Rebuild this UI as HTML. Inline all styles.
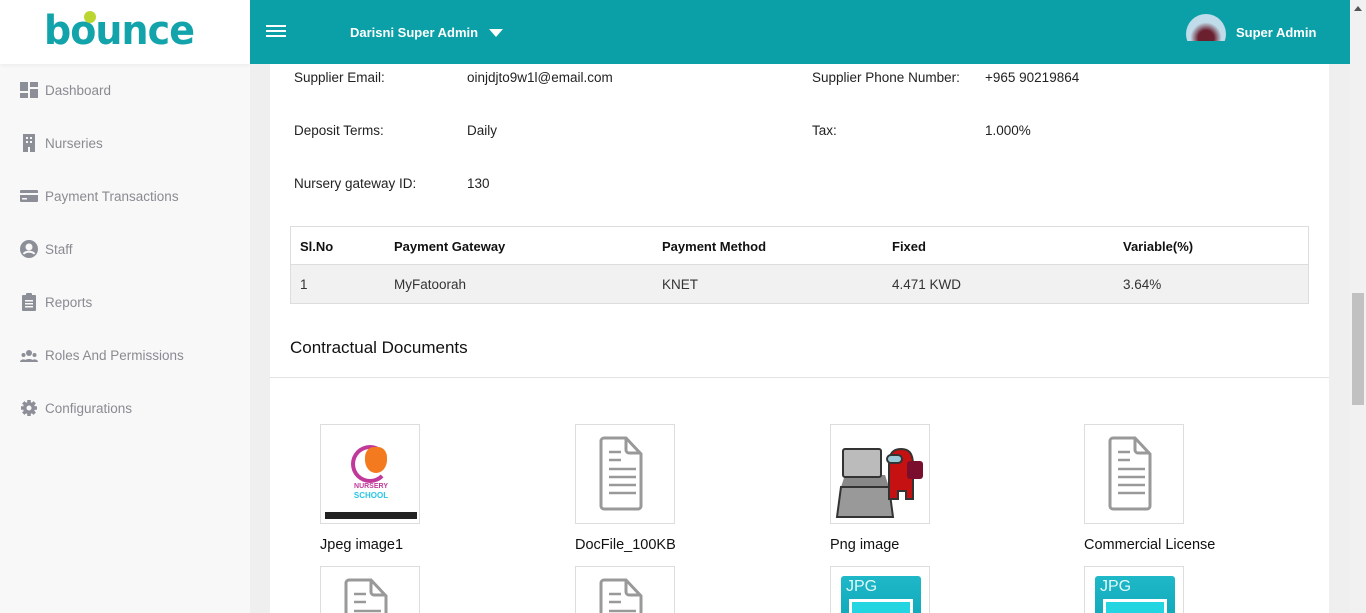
<!DOCTYPE html>
<html style="height:613px;overflow:hidden"><head><style>
*{box-sizing:border-box;margin:0;padding:0}
body{width:1366px;height:613px;overflow:hidden;background:#efefef;font-family:"Liberation Sans",sans-serif;position:relative}
.side{position:absolute;left:0;top:0;width:250px;height:613px;background:#f8f8f8}
.logo{height:64px;background:#fff;box-shadow:0 2px 3px rgba(0,0,0,.04);position:relative;overflow:hidden}
.nav{position:absolute;left:20px;font-size:13.5px;color:#8a8a92;display:flex;align-items:center}
.nav svg{width:18px;height:18px;margin-right:7px;fill:#8d8f98}
.hdr{position:absolute;left:250px;top:0;width:1100px;height:64px;background:#0ba0a8;color:#fff;font-weight:bold;font-size:13px}
.card{position:absolute;left:270px;top:64px;width:1059px;height:549px;background:#fff}
.t{position:absolute;font-size:13.5px;color:#222}
.scroll{position:absolute;left:1350px;top:0;width:16px;height:613px;background:#f1f1f1}
.doc{position:absolute;width:100px;height:100px;border:1px solid #ddd;background:#fff;overflow:hidden}
.clip{position:absolute;left:0;top:0;width:1366px;height:613px;overflow:hidden}
.lbl{position:absolute;font-size:14.5px;color:#111}
</style></head><body><div class="clip">
<div class="side">
 <div class="logo"><span style="position:absolute;left:44px;top:8px;font-size:40px;font-weight:bold;color:#13a3ab;letter-spacing:-1px;font-family:'DejaVu Sans',sans-serif;transform:scaleX(0.95);transform-origin:left">bounce</span><span style="position:absolute;left:84px;top:11px;width:12px;height:12px;border-radius:50%;background:#bcd631"></span></div>
 <div class="nav" style="top:81px"><svg viewBox="0 0 18 18"><rect x="0" y="1" width="8" height="9"/><rect x="10" y="1" width="8" height="5"/><rect x="0" y="12" width="8" height="5"/><rect x="10" y="8" width="8" height="9"/></svg>Dashboard</div>
 <div class="nav" style="top:134px"><svg viewBox="0 0 18 18"><rect x="3" y="0" width="12" height="18"/><rect x="6" y="3" width="2" height="2" fill="#f8f8f8"/><rect x="10" y="3" width="2" height="2" fill="#f8f8f8"/><rect x="6" y="7" width="2" height="2" fill="#f8f8f8"/><rect x="10" y="7" width="2" height="2" fill="#f8f8f8"/><rect x="8" y="13" width="2" height="5" fill="#f8f8f8"/></svg>Nurseries</div>
 <div class="nav" style="top:187px"><svg viewBox="0 0 18 18"><rect x="0" y="3" width="18" height="12" rx="1"/><rect x="0" y="6" width="18" height="2" fill="#f8f8f8"/><rect x="2" y="11" width="5" height="1.5" fill="#f8f8f8"/></svg>Payment Transactions</div>
 <div class="nav" style="top:240px"><svg viewBox="0 0 18 18"><circle cx="9" cy="9" r="9"/><circle cx="9" cy="7" r="3.5" fill="#f8f8f8"/><path d="M3.5 14c2-3 9-3 11 0" stroke="#f8f8f8" stroke-width="2" fill="none"/></svg>Staff</div>
 <div class="nav" style="top:293px"><svg viewBox="0 0 18 18"><rect x="2" y="2" width="14" height="16" rx="1"/><rect x="6" y="0" width="6" height="4" rx="1"/><rect x="5" y="7" width="8" height="1.5" fill="#f8f8f8"/><rect x="5" y="10" width="8" height="1.5" fill="#f8f8f8"/><rect x="5" y="13" width="8" height="1.5" fill="#f8f8f8"/></svg>Reports</div>
 <div class="nav" style="top:346px"><svg viewBox="0 0 18 18"><circle cx="9" cy="7" r="3"/><circle cx="3.5" cy="9" r="2"/><circle cx="14.5" cy="9" r="2"/><path d="M4 16c0-4 10-4 10 0z"/><path d="M0 16c0-3 5-3 5-2v2z"/><path d="M18 16c0-3-5-3-5-2v2z"/></svg>Roles And Permissions</div>
 <div class="nav" style="top:399px"><svg viewBox="0 0 18 18"><circle cx="9" cy="9" r="6"/><g stroke="#8d8f98" stroke-width="3.5"><path d="M9 1v16M1 9h16M3.3 3.3l11.4 11.4M14.7 3.3L3.3 14.7"/></g><circle cx="9" cy="9" r="2.5" fill="#f8f8f8"/></svg>Configurations</div>
</div>
<div class="hdr">
 <div style="position:absolute;left:16px;top:25px;width:20px;height:2px;background:#fff;box-shadow:0 5px 0 #fff,0 10px 0 #fff"></div>
 <div style="position:absolute;left:100px;top:25px">Darisni Super Admin</div>
 <div style="position:absolute;left:239px;top:29px;border-left:7px solid transparent;border-right:7px solid transparent;border-top:8px solid #fff"></div>
 <div style="position:absolute;left:936px;top:14px;width:40px;height:40px;border-radius:50%;background:radial-gradient(circle at 50% 60%,#6b2030 25%,#c0dcea 50%);clip-path:inset(0 0 13px 0)"></div>
 <div style="position:absolute;left:986px;top:25px">Super Admin</div>
</div>
<div class="card">
 <div class="t" style="left:24px;top:6px">Supplier Email:</div>
 <div class="t" style="left:197px;top:6px">oinjdjto9w1l@email.com</div>
 <div class="t" style="left:542px;top:6px">Supplier Phone Number:</div>
 <div class="t" style="left:715px;top:6px">+965 90219864</div>
 <div class="t" style="left:24px;top:59px">Deposit Terms:</div>
 <div class="t" style="left:197px;top:59px">Daily</div>
 <div class="t" style="left:542px;top:59px">Tax:</div>
 <div class="t" style="left:715px;top:59px">1.000%</div>
 <div class="t" style="left:24px;top:112px">Nursery gateway ID:</div>
 <div class="t" style="left:197px;top:112px">130</div>
 <div style="position:absolute;left:20px;top:162px;width:1019px;height:78px;border:1px solid #ddd">
  <div style="height:38px;border-bottom:1px solid #ddd;position:relative;font-weight:bold;font-size:13px;color:#111">
   <span style="position:absolute;left:9px;top:12px">Sl.No</span><span style="position:absolute;left:103px;top:12px">Payment Gateway</span><span style="position:absolute;left:371px;top:12px">Payment Method</span><span style="position:absolute;left:601px;top:12px">Fixed</span><span style="position:absolute;left:832px;top:12px">Variable(%)</span>
  </div>
  <div style="height:38px;background:#f1f1f1;position:relative;font-size:13.5px;color:#333">
   <span style="position:absolute;left:9px;top:12px">1</span><span style="position:absolute;left:103px;top:12px">MyFatoorah</span><span style="position:absolute;left:371px;top:12px">KNET</span><span style="position:absolute;left:601px;top:12px">4.471 KWD</span><span style="position:absolute;left:832px;top:12px">3.64%</span>
  </div>
 </div>
 <div style="position:absolute;left:20px;top:274px;font-size:17px;color:#111">Contractual Documents</div>
 <div style="position:absolute;left:0;top:313px;width:1059px;height:1px;background:#e3e3e3"></div>
</div>
<svg width="0" height="0" style="position:absolute"><defs><g id="d"><path d="M28 13h22l15 16v52a3 3 0 0 1-3 3H28a3 3 0 0 1-3-3V16a3 3 0 0 1 3-3z" fill="none" stroke="#999" stroke-width="3"/><path d="M50 13v12a3 3 0 0 0 3 3h12" fill="none" stroke="#999" stroke-width="3"/><g stroke="#999" stroke-width="2.5"><path d="M33 27h12M33 35h12M33 44h27M33 52h27M33 60h27M33 68h27"/></g></g></defs></svg>
<div class="doc" style="left:320px;top:424px"><div style="position:absolute;left:30px;top:20px;width:38px;height:38px;border-radius:50%;border:4px solid #c0399a;border-right-color:transparent"></div><div style="position:absolute;left:44px;top:22px;width:22px;height:26px;background:#f47a20;border-radius:40% 40% 50% 50%"></div><div style="position:absolute;left:0;top:58px;width:100px;text-align:center;font-size:7px;font-weight:bold;color:#c0399a">NURSERY</div><div style="position:absolute;left:0;top:66px;width:100px;text-align:center;font-size:8px;font-weight:bold;color:#29c5e6">SCHOOL</div><div style="position:absolute;left:4px;top:87px;width:92px;height:7px;background:#222"></div></div>
<div class="doc" style="left:575px;top:424px"><svg width="100" height="100"><use href="#d"/></svg></div>
<div class="doc" style="left:830px;top:424px"><svg width="100" height="100"><path d="M10 62l4-12h40l4 12z" fill="#888"/><rect x="12" y="24" width="38" height="28" rx="2" fill="#bbb" stroke="#333" stroke-width="2"/><path d="M6 92l4-30h48l4 30z" fill="#999" stroke="#333" stroke-width="2"/><path d="M58 40c0-12 4-16 12-16s12 4 12 16v34h-7v-8h-8v8h-9z" fill="#c51111" stroke="#333" stroke-width="2"/><rect x="76" y="36" width="16" height="18" rx="3" fill="#7a0e2e"/><rect x="56" y="30" width="15" height="8" rx="4" fill="#9ac9d8" stroke="#333" stroke-width="2"/></svg></div>
<div class="doc" style="left:1084px;top:424px"><svg width="100" height="100"><use href="#d"/></svg></div>
<div class="lbl" style="left:320px;top:537px">Jpeg image1</div>
<div class="lbl" style="left:575px;top:537px">DocFile_100KB</div>
<div class="lbl" style="left:830px;top:537px">Png image</div>
<div class="lbl" style="left:1084px;top:537px">Commercial License</div>
<div class="doc" style="left:320px;top:566px;height:47px;border-bottom:none"><svg width="100" height="100"><use href="#d"/></svg></div>
<div class="doc" style="left:575px;top:566px;height:47px;border-bottom:none"><svg width="100" height="100"><use href="#d"/></svg></div>
<div class="doc" style="left:830px;top:566px;height:47px;border-bottom:none"><div style="position:absolute;left:10px;top:9px;width:80px;height:60px;background:linear-gradient(#1fb8c8,#0aa3b5);border-radius:3px"></div><span style="position:absolute;left:15px;top:11px;color:#e0f8fa;font-size:16px">JPG</span><div style="position:absolute;left:18px;top:32px;width:64px;height:20px;border:3px solid #fff;border-bottom:none;background:#22d5e0"></div></div>
<div class="doc" style="left:1084px;top:566px;height:47px;border-bottom:none"><div style="position:absolute;left:10px;top:9px;width:80px;height:60px;background:linear-gradient(#1fb8c8,#0aa3b5);border-radius:3px"></div><span style="position:absolute;left:15px;top:11px;color:#e0f8fa;font-size:16px">JPG</span><div style="position:absolute;left:18px;top:32px;width:64px;height:20px;border:3px solid #fff;border-bottom:none;background:#22d5e0"></div></div>
<div class="scroll"><div style="position:absolute;left:4px;top:6px;border-left:4px solid transparent;border-right:4px solid transparent;border-bottom:5px solid #555"></div><div style="position:absolute;left:2px;top:293px;width:12px;height:112px;background:#c1c1c1"></div></div>
</div></body></html>
